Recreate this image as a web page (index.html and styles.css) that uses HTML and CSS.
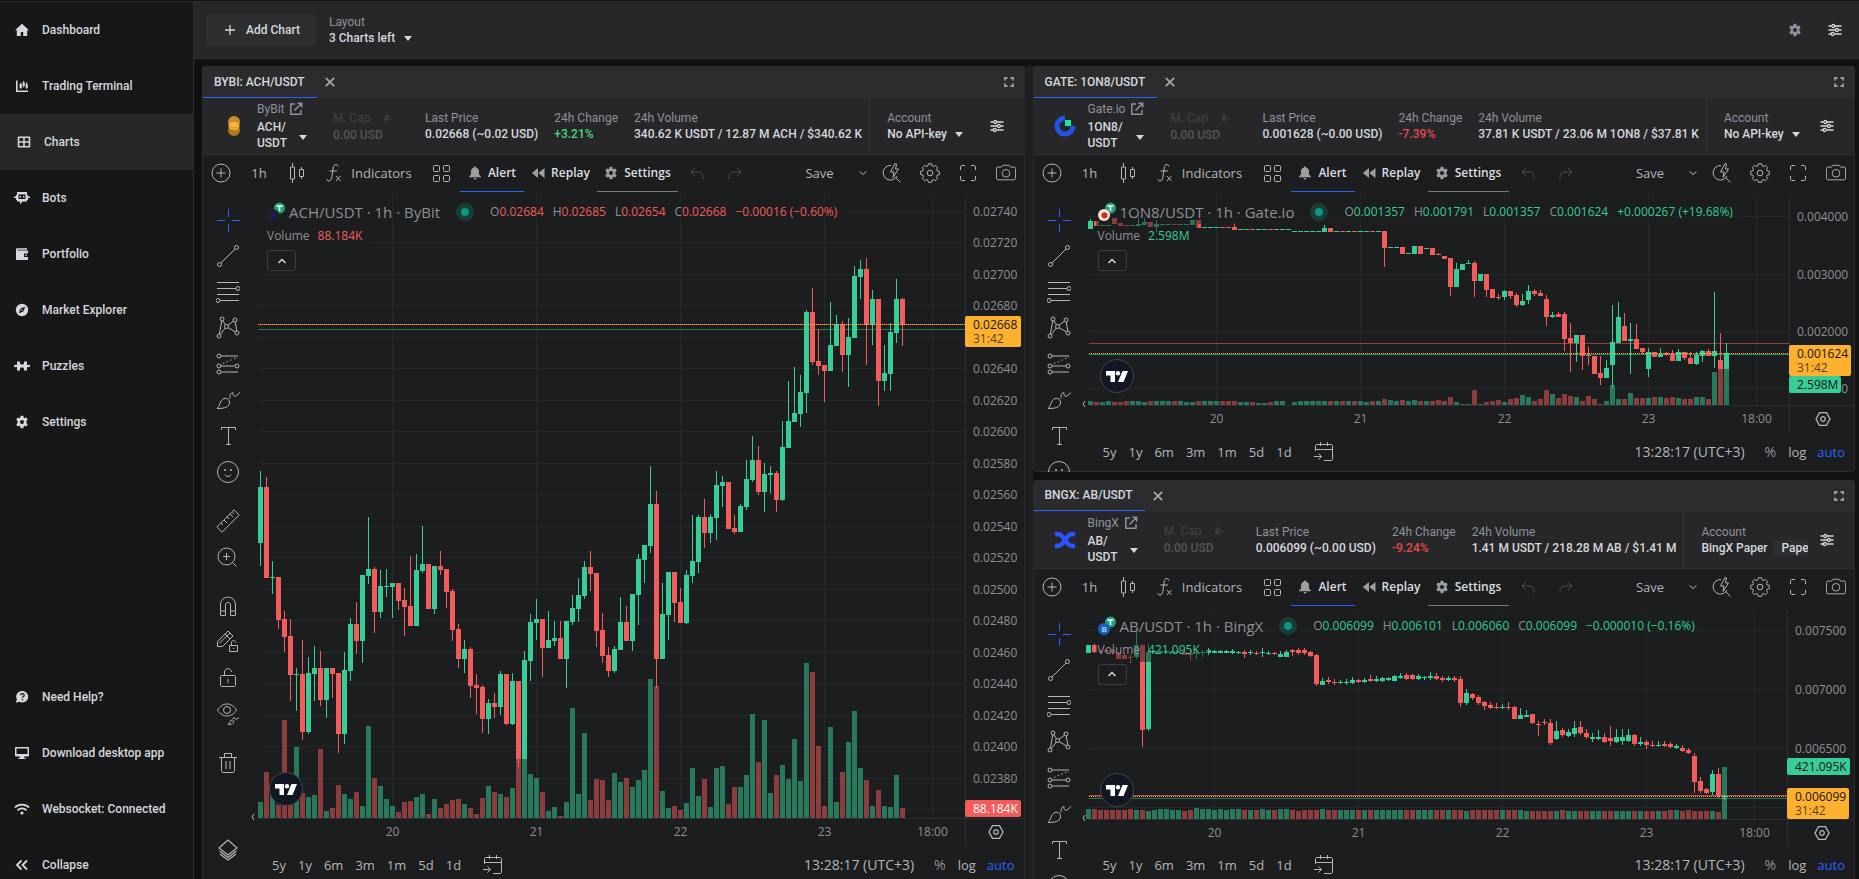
FILE: index.html
```html
<!DOCTYPE html>
<html lang="en">
<head>
    <meta charset="UTF-8">
    <meta name="viewport" content="width=device-width, initial-scale=1.0">
    <title>Charts</title>
    <link rel="stylesheet" href="styles.css">
</head>
<body>
    <!-- icon sprite -->
    <svg class="sprite" aria-hidden="true">
        <symbol id="home" viewBox="0 0 14 14"><path d="M7 .8 0 7.2h1.8V13h4V9h2.4v4h4V7.2H14z"/></symbol>
        <symbol id="terminal" viewBox="0 0 14 14"><path d="M1 1.5h1.6v9.9H13V13H1zM4.6 5h.7V3.6h.9V5h.7v4h-.7v1h-.9V9h-.7zM7.6 3.5h.6V2h.9v1.500h.7v3.500h-.7v1.500h-.9V7h-.6zM10.600 5h.6V3h.9v2h.7v4h-.7v1h-.9V9h-.6z"/></symbol>
        <symbol id="charts" viewBox="0 0 14 14"><path fill-rule="evenodd" d="M1.500 1.500h11a.8.8 0 0 1 .8.8v9.400a.8.8 0 0 1-.8.8h-11a.8.8 0 0 1-.8-.8V2.300a.8.8 0 0 1 .8-.8zM2.300 3v3.200h3.900V3zm5.500 0v3.200h3.900V3zM2.300 7.800V11h3.900V7.800zm5.500 0V11h3.900V7.800z"/></symbol>
        <symbol id="bots" viewBox="0 0 16 14"><path fill-rule="evenodd" d="M3 1h10v3h1v1.500h2V7h-2v2h-1v1.500H8.500L6 13.500v-3H3V9H2V7H0V5.500h2V4h1zM4.500 3.500v4.500h7V3.500zM5.500 5h1.500v1.500H5.500zM9 5h1.500v1.500H9z"/></symbol>
        <symbol id="portfolio" viewBox="0 0 14 14"><path fill-rule="evenodd" d="M1 2.500C1 1.700 1.700 1.200 2.400 1.200H12v1.500H2.500v.8H13v9.500H1zM9 6.500v3.500h4V6.500zM10.300 7.600h1.300v1.300h-1.300z"/></symbol>
        <symbol id="compass" viewBox="0 0 14 14"><path fill-rule="evenodd" d="M7 .8a6.200 6.200 0 1 0 0 12.400A6.200 6.200 0 0 0 7 .8zM10.200 3.800 8.400 8.400 3.800 10.200 5.600 5.600zM7 6.200a.8.8 0 1 0 0 1.600.8.8 0 0 0 0-1.600z"/></symbol>
        <symbol id="puzzle" viewBox="0 0 16 14"><path d="M3 2.500h3V4c0 .9.600 1.500 1.500 1.500h1C9.400 5.500 10 4.900 10 4V2.500h3V6h1.200c.4-.6 1.800-.3 1.800 1s-1.400 1.600-1.800 1H13v3.500h-3V10c0-.9-.6-1.500-1.500-1.500h-1C6.600 8.500 6 9.100 6 10v1.500H3V8H1.800C1.400 8.600 0 8.300 0 7s1.400-1.600 1.800-1H3z"/></symbol>
        <symbol id="gear" viewBox="0 0 14 14"><path fill-rule="evenodd" d="M5.700.8h2.600l.4 1.800 1 .6 1.700-.6 1.300 2.200L11.400 6v2l1.300 1.200-1.300 2.200-1.700-.6-1 .6-.4 1.800H5.700l-.4-1.800-1-.6-1.700.6-1.300-2.200L2.600 8V6L1.300 4.800l1.300-2.200 1.700.6 1-.6zM7 5a2 2 0 1 0 0 4 2 2 0 0 0 0-4z"/></symbol>
        <symbol id="help" viewBox="0 0 14 14"><path d="M7.300 1C3.800 1 1.200 3.500 1.200 6.600c0 1 .3 1.900.7 2.700L.8 12.800l3.500-1a6.600 6.600 0 0 0 3 .6c3.300 0 5.900-2.500 5.900-5.700S10.600 1 7.300 1z"/><path d="M5.600 5.300c0-2.200 3.600-2.200 3.600 0 0 1.200-1.700 1.200-1.700 2.500M7.500 9v1.200" stroke="#171717" stroke-width="1.300" fill="none"/></symbol>
        <symbol id="desktop" viewBox="0 0 14 14"><path fill-rule="evenodd" d="M1 1h12c.6 0 1 .4 1 1v7.500c0 .6-.4 1-1 1H9l.5 1.700H11V13H3v-.8h1.500l.5-1.700H1c-.6 0-1-.4-1-1V2c0-.6.4-1 1-1zM1.500 2.500V8h11V2.500z"/></symbol>
        <symbol id="wifi" viewBox="0 0 16 14"><path d="M.8 5.500a10.300 10.300 0 0 1 14.400 0M3.500 8.300a6.400 6.400 0 0 1 9 0" fill="none" stroke="currentColor" stroke-width="1.700"/><circle cx="8" cy="11" r="1.600"/></symbol>
        <symbol id="collapse" viewBox="0 0 14 14"><path d="M6.500 2.500 2 7l4.500 4.500M12 2.500 7.500 7l4.500 4.500" fill="none" stroke="currentColor" stroke-width="1.800"/></symbol>
        <symbol id="plus" viewBox="0 0 12 12"><path d="M6 1v10M1 6h10" stroke="currentColor" stroke-width="1.300"/></symbol>
        <symbol id="caret" viewBox="0 0 8 5"><path d="M0 0h8L4 5z"/></symbol>
        <symbol id="sliders" viewBox="0 0 14 14"><g fill="none" stroke="currentColor" stroke-width="1.300"><path d="M.5 3h3M7 3h6.500M.5 7h6.500M10.800 7h2.700M.5 11H3M6.500 11h7"/><circle cx="5.300" cy="3" r="1.500"/><circle cx="8.900" cy="7" r="1.500"/><circle cx="4.700" cy="11" r="1.500"/></g></symbol>
        <symbol id="close" viewBox="0 0 10 10"><path d="m.8.8 8.400 8.400m0-8.400L.8 9.200" stroke="currentColor" stroke-width="1.700"/></symbol>
        <symbol id="expand" viewBox="0 0 12 12"><path d="M2 4.500V2h2.500M7.500 2H10v2.500M10 7.500V10H7.500M4.500 10H2V7.500" fill="none" stroke="currentColor" stroke-width="1.800"/></symbol>
        <symbol id="link" viewBox="0 0 14 14"><path d="M6 2H1.800v10.200H12V8M8.500 1.300h4.200v4.200M12.500 1.500 5.500 8.500" fill="none" stroke="currentColor" stroke-width="1.500"/></symbol>
        <symbol id="bybit" viewBox="0 0 24 24"><circle cx="12" cy="8" r="6" fill="#c98f2c"/><circle cx="12" cy="16" r="6" fill="#b47a17"/><ellipse cx="12" cy="12" rx="5.500" ry="4" fill="#f7b63c"/><path d="M6.500 11c3 4 8 4 11 0M8 6l7 2M13 18l3-2" stroke="#c98f2c" fill="none"/></symbol>
        <symbol id="gate" viewBox="0 0 24 24"><path d="M12 4a8 8 0 1 0 8 8" fill="none" stroke="#2354e6" stroke-width="5"/><path d="M12 6h6v6h-6z" fill="#17e6a1"/></symbol>
        <symbol id="bingx" viewBox="0 0 24 24"><path d="M2 6.500c5-1.500 7 1 10 5.500s5 7 10 5.500M22 6.500c-5-1.500-7 1-10 5.500s-5 7-10 5.500" fill="none" stroke="#2a54ff" stroke-width="4.500"/></symbol>
        <symbol id="add" viewBox="0 0 20 20"><g fill="none" stroke="currentColor"><circle cx="10" cy="10" r="9"/><path d="M10 5.500v9M5.500 10h9"/></g></symbol>
        <symbol id="candles" viewBox="0 0 20 20"><path d="M3.500 4h4v12h-4zM5.500 0v4M5.500 16v4M12.500 6.500h4v7h-4zM14.500 4v2.500M14.500 13.500V16" fill="none" stroke="currentColor"/></symbol>
        <symbol id="fx" viewBox="0 0 20 20"><path d="M14 3.500c0-1-.8-2-2-2-1.700 0-2.500 1.300-2.800 3.500L7.800 14.500c-.3 2-1.300 3.500-2.800 3.500-1.200 0-2-.8-2-2M5.500 8H13M12 13l4.500 5M16.500 13 12 18" fill="none" stroke="currentColor"/></symbol>
        <symbol id="tiles" viewBox="0 0 18 18"><g fill="none" stroke="currentColor"><rect x="1.500" y="1.500" width="6" height="6" rx="1"/><rect x="11.500" y="1.500" width="6" height="6" rx="1"/><rect x="1.500" y="11.500" width="6" height="6" rx="1"/><rect x="11.500" y="11.500" width="6" height="6" rx="1"/></g></symbol>
        <symbol id="bell" viewBox="0 0 14 14"><path d="M7 .5c.7 0 1 .4 1 1 2 .5 3 2 3 4v3l2 2v.8H1v-.8l2-2v-3c0-2 1-3.500 3-4 0-.6.300-1 1-1zM5.500 12h3c0 .8-.7 1.500-1.500 1.500S5.500 12.800 5.500 12z"/></symbol>
        <symbol id="rewind" viewBox="0 0 14 14"><path d="M7 2v10L.8 7zM13.500 2v10L7.300 7z"/></symbol>
        <symbol id="undo" viewBox="0 0 16 16"><path d="M6 3 2 7l4 4M2 7h7c3 0 5 2 5 4.500V14" fill="none" stroke="currentColor"/></symbol>
        <symbol id="redo" viewBox="0 0 16 16"><path d="m10 3 4 4-4 4M14 7H7c-3 0-5 2-5 4.500V14" fill="none" stroke="currentColor"/></symbol>
        <symbol id="down" viewBox="0 0 10 10"><path d="m1.500 3.500 3.500 3 3.500-3" fill="none" stroke="currentColor"/></symbol>
        <symbol id="up" viewBox="0 0 10 10"><path d="M1.500 7 5 3.500 8.500 7" fill="none" stroke="currentColor" stroke-width="1.500"/></symbol>
        <symbol id="quick" viewBox="0 0 20 20"><path d="M9 2.500A7.300 7.300 0 1 0 15 13M13.500 14.500l5 5M13 .5 8.500 9H12l-1 5.500L16.500 6H13.500l1-5z" fill="none" stroke="currentColor"/></symbol>
        <symbol id="cog" viewBox="0 0 20 20"><g fill="none" stroke="currentColor"><circle cx="10" cy="10" r="2.800"/><path d="M8.300.8h3.400l.5 2.200 1.300.6 1.900-1.200 2.300 2.300-1.200 1.900.6 1.300 2.200.5v3.300l-2.200.5-.6 1.300 1.200 1.900-2.300 2.300-1.900-1.200-1.300.6-.5 2.200H8.300l-.5-2.200-1.300-.6-1.900 1.200-2.300-2.300 1.200-1.900-.6-1.300-2.200-.5V8.400l2.200-.5.600-1.300-1.200-1.900 2.300-2.300 1.900 1.200L7.800 3z"/></g></symbol>
        <symbol id="full" viewBox="0 0 18 18"><path d="M1.500 6V3c0-1 .5-1.500 1.500-1.500h3M12 1.500h3c1 0 1.500.5 1.500 1.500v3M16.500 12v3c0 1-.5 1.500-1.500 1.500h-3M6 16.500H3c-1 0-1.500-.5-1.500-1.500v-3" fill="none" stroke="currentColor"/></symbol>
        <symbol id="camera" viewBox="0 0 22 20"><g fill="none" stroke="currentColor"><path d="M6 3.500 7.500 1.500h7L16 3.500h4c.8 0 1.500.7 1.500 1.500v11c0 .8-.7 1.500-1.500 1.500H2c-.8 0-1.500-.7-1.500-1.500V5c0-.8.7-1.500 1.500-1.500z"/><circle cx="11" cy="10.300" r="4.200"/></g></symbol>
        <symbol id="cross" viewBox="0 0 24 24"><path d="M12.500 1v8M12.500 16v8M1 12.500h8M16 12.500h8" fill="none" stroke="currentColor"/></symbol>
        <symbol id="trend" viewBox="0 0 24 24"><g fill="none" stroke="currentColor"><circle cx="3.500" cy="20.500" r="2"/><circle cx="20.500" cy="3.500" r="2"/><path d="M5 19 19 5"/></g></symbol>
        <symbol id="fib" viewBox="0 0 24 24"><g fill="none" stroke="currentColor"><path d="M1 2.500h22M1 8.500h19M1 14.500h22M4 20.500h19"/><circle cx="22" cy="8.500" r="2"/><circle cx="2" cy="20.500" r="2"/></g></symbol>
        <symbol id="pattern" viewBox="0 0 24 24"><g fill="none" stroke="currentColor"><circle cx="6" cy="3" r="2"/><circle cx="19" cy="4" r="2"/><circle cx="3" cy="20" r="2"/><circle cx="21" cy="17" r="2"/><circle cx="10.500" cy="10.500" r="2"/><path d="M5.700 5 3.400 18M6.800 4.800l2.700 4M12 9.200l5.500-4M12.200 11.700l7.300 4.200M19.300 6l1.400 9M4.300 18.500l5-6.500"/></g></symbol>
        <symbol id="forecast" viewBox="0 0 24 24"><g fill="none" stroke="currentColor"><circle cx="3" cy="4" r="2"/><circle cx="3" cy="14" r="2"/><circle cx="21" cy="14" r="2"/><circle cx="3" cy="20" r="2"/><path d="M5 4h17M5 14h14M5 20h17"/><path d="M7 11.500 22 5" stroke-dasharray="1.500 2.500"/></g></symbol>
        <symbol id="brush" viewBox="0 0 24 24"><path d="M1 20.500c3-2 2.500-8 7-10 3-1 6 1.500 5.500 4.500-.8 4.500-5 5.500-12.500 5.500zM14 10.500c-.5-3 1-6 3-6-.5 3 1 4.500 3 3.500 2-1.500 3-3 5-4.500" fill="none" stroke="currentColor"/></symbol>
        <symbol id="text" viewBox="0 0 24 24"><path d="M5.500 6V3.500h14V6M12.500 3.500v17M10 20.500h5" fill="none" stroke="currentColor"/></symbol>
        <symbol id="smile" viewBox="0 0 24 24"><circle cx="12" cy="12" r="10.500" fill="none" stroke="currentColor"/><path d="M9 14.500c.5 2.500 5.500 2.500 6 0" fill="none" stroke="currentColor"/><circle cx="9" cy="10" r="1"/><circle cx="15" cy="10" r="1"/></symbol>
        <symbol id="ruler" viewBox="0 0 24 24"><path d="M.8 18 18 .8 23.200 6 6 23.200zM5 14l2 2M8 11l3 3M11 8l2 2M14 5l3 3M16.500 3.500l1.500 1.500" fill="none" stroke="currentColor"/></symbol>
        <symbol id="zoomin" viewBox="0 0 24 24"><g fill="none" stroke="currentColor"><circle cx="10.500" cy="11.500" r="8.500"/><path d="m16.500 17.500 4 4M10.500 8v7M7 11.500h7"/></g></symbol>
        <symbol id="magnet" viewBox="0 0 24 24"><path d="M4.500 21.500V11c0-10.500 15-10.500 15 0v10.500h-5V11c0-3.500-5-3.500-5 0v10.500zM4.500 17h5M14.500 17h5" fill="none" stroke="currentColor"/></symbol>
        <symbol id="pencil" viewBox="0 0 24 24"><path d="M1.500 16.500v-5L12 1l5 5L6.500 16.500zM3.500 13 14 3M9 4l5 5M13.500 15.500h8v6h-8zM15.500 15.500v-3c0-2.500 4-2.500 4.500 0M17.500 18v1" fill="none" stroke="currentColor"/></symbol>
        <symbol id="lock" viewBox="0 0 24 24"><path d="M6 9.500h12c1 0 1.500.5 1.500 1.500v8c0 1-.5 1.500-1.500 1.500H6c-1 0-1.500-.5-1.500-1.500v-8c0-1 .5-1.500 1.500-1.500zM8.500 9.500V6c0-4.500 6.500-4.500 7 0M12 13v4" fill="none" stroke="currentColor"/></symbol>
        <symbol id="eye" viewBox="0 0 24 24"><g fill="none" stroke="currentColor"><path d="M1.500 8c5-8 14-8 19 0-5 8-14 8-19 0z"/><circle cx="11" cy="8" r="3.500"/><path d="M12 22.500c2-1 1.500-4 4-4.500s3.500 4.500-4 4.500zM17 17c0-2 1.500-2 2 0 1 1 2-1 4-1"/></g></symbol>
        <symbol id="trash" viewBox="0 0 24 24"><path d="M3 6.500h18M8.500 6V2.500h7V6M5.500 6.500v13c0 1 .5 2 1.500 2h10c1 0 1.500-1 1.500-2v-13M10 10v8M14 10v8" fill="none" stroke="currentColor"/></symbol>
        <symbol id="layers" viewBox="0 0 24 24"><path d="M12 2 3 10l9 7 9-7zM3.500 13l8.500 6.500L20.500 13M4 16l8 6 8-6" fill="none" stroke="currentColor" stroke-width="1.200"/></symbol>
        <symbol id="calendar" viewBox="0 0 20 20"><path d="M1.500 9V4c0-1 .5-1.500 1.500-1.500h14c1 0 1.500.5 1.500 1.500v13c0 1-.5 1.500-1.500 1.500h-7M1.500 7.500h17M6.500 0v4M13.500 0v4M0 14.500h7.500M4.500 11.500l3 3-3 3" fill="none" stroke="currentColor"/></symbol>
    </svg>

    <div class="app">
        <nav class="sidebar">
            <a class="nav-item" href="#"><svg class="nav-icon"><use href="#home"/></svg>Dashboard</a>
            <a class="nav-item" href="#"><svg class="nav-icon"><use href="#terminal"/></svg>Trading Terminal</a>
            <a class="nav-item active" href="#"><svg class="nav-icon"><use href="#charts"/></svg>Charts</a>
            <a class="nav-item" href="#"><svg class="nav-icon"><use href="#bots"/></svg>Bots</a>
            <a class="nav-item" href="#"><svg class="nav-icon"><use href="#portfolio"/></svg>Portfolio</a>
            <a class="nav-item" href="#"><svg class="nav-icon"><use href="#compass"/></svg>Market Explorer</a>
            <a class="nav-item" href="#"><svg class="nav-icon"><use href="#puzzle"/></svg>Puzzles</a>
            <a class="nav-item" href="#"><svg class="nav-icon"><use href="#gear"/></svg>Settings</a>
            <div class="nav-space"></div>
            <a class="nav-item" href="#"><svg class="nav-icon"><use href="#help"/></svg>Need Help?</a>
            <a class="nav-item" href="#"><svg class="nav-icon"><use href="#desktop"/></svg>Download desktop app</a>
            <a class="nav-item" href="#"><svg class="nav-icon"><use href="#wifi"/></svg>Websocket: Connected</a>
            <button class="nav-item" type="button"><svg class="nav-icon"><use href="#collapse"/></svg>Collapse</button>
        </nav>

        <div class="content">
            <header class="topbar">
                <button class="add-chart" type="button"><svg class="i12"><use href="#plus"/></svg>Add Chart</button>
                <div class="field">
                    <label class="label" for="layout">Layout</label>
                    <div class="field-row">
                        <select class="select" id="layout"><option>3 Charts left</option></select>
                        <svg class="caret"><use href="#caret"/></svg>
                    </div>
                </div>
                <div class="topbar-actions">
                    <button class="icon-btn muted" type="button" aria-label="Settings"><svg class="i14"><use href="#gear"/></svg></button>
                    <button class="icon-btn" type="button" aria-label="Filters"><svg class="i14"><use href="#sliders"/></svg></button>
                </div>
            </header>

            <main class="board">
                <div class="column"><section class="panel" data-chart="ach"></section></div>
                <div class="gutter"></div>
                <div class="column">
                    <section class="panel" data-chart="on8"></section>
                    <section class="panel" data-chart="ab"></section>
                </div>
            </main>
        </div>
    </div>

    <script src="charts.js"></script>
</body>
</html>
```

FILE: styles.css
```css
* {
    box-sizing: border-box;
}

body {
    margin: 0;
    height: 100vh;
    overflow: hidden;
    background: #101113;
    color: #d5d8de;
    font-family: Roboto, "Liberation Sans", sans-serif;
    font-size: 12px;
    line-height: 16px;
}

button,
select {
    margin: 0;
    padding: 0;
    border: none;
    background: none;
    color: inherit;
    font: inherit;
    cursor: pointer;
}

svg {
    flex: none;
    fill: currentColor;
}

.sprite {
    position: absolute;
    width: 0;
    height: 0;
}

.i12 { width: 12px; height: 12px; }
.i14 { width: 14px; height: 14px; }
.i16 { width: 16px; height: 16px; }
.i18 { width: 18px; height: 18px; }
.i20 { width: 20px; height: 20px; }
.i24 { width: 24px; height: 24px; }

.caret {
    width: 8px;
    height: 5px;
}

.app {
    display: flex;
    height: calc(100vh + 14px);
    padding-top: 1px;
}

/* sidebar */
.sidebar {
    display: flex;
    flex-direction: column;
    flex: none;
    width: 194px;
    background: #171717;
    border-top: 1px solid #2d2d30;
    border-right: 1px solid #2d2d30;
}

.nav-item {
    display: flex;
    align-items: center;
    gap: 12px;
    flex: none;
    height: 56px;
    padding: 0 14px;
    color: #d5d8de;
    font-weight: 500;
    text-decoration: none;
}

.nav-item.active {
    padding-left: 16px;
    background: #272729;
}

.nav-icon {
    width: 16px;
    height: 14px;
}

.nav-space {
    flex: 1;
}

/* top bar */
.content {
    display: flex;
    flex-direction: column;
    flex: 1;
    min-width: 0;
}

.topbar {
    display: flex;
    align-items: center;
    flex: none;
    height: 58px;
    padding: 0 17px 0 12px;
    background: #272729;
    border-top: 1px solid #2d2d30;
    border-bottom: 1px solid #323235;
}

.add-chart {
    display: flex;
    align-items: center;
    gap: 10px;
    height: 32px;
    margin-right: 13px;
    padding: 0 16px 0 18px;
    border-radius: 4px;
    background: #2e2e30;
    font-weight: 500;
}

.label {
    display: block;
    color: #8d929e;
}

.field-row {
    display: flex;
    align-items: center;
    gap: 8px;
}

.select {
    appearance: none;
    height: 16px;
    font-weight: 500;
    outline: none;
}

.topbar-actions {
    display: flex;
    gap: 26px;
    margin-left: auto;
}

.icon-btn {
    display: flex;
}

.muted {
    color: #8d929e;
}

/* board */
.board {
    display: flex;
    flex: 1;
    min-height: 0;
    padding: 7px 4px 8px 8px;
}

.column {
    display: flex;
    flex-direction: column;
    flex: 1;
    gap: 8px;
    min-width: 0;
}

.gutter {
    width: 8px;
    background: #1f1f21;
}

.panel {
    display: flex;
    flex-direction: column;
    flex: 1;
    min-height: 0;
    overflow: hidden;
    border-radius: 4px;
    background: #1b1d1f;
    box-shadow: inset 0 0 0 1px #2d2d30;
}

.tabs {
    display: flex;
    align-items: center;
    flex: none;
    height: 32px;
    padding: 0 10px 0 1px;
    background: #2c2c2e;
}

.tab {
    height: 31px;
    margin-right: 8px;
    padding: 0 12px 0 11px;
    border-bottom: 1px solid #2962ff;
    font-weight: 500;
}

.tab-close {
    display: flex;
    color: #a5a9b4;
}

.tab-close svg {
    width: 10px;
    height: 10px;
}

.tab-expand {
    display: flex;
    margin-left: auto;
    color: #9a9faa;
}

/* ticker info */
.info {
    display: flex;
    align-items: center;
    flex: none;
    height: 57px;
    padding-left: 20px;
    background: #272729;
    border-bottom: 1px solid #2f2f32;
}

.pair {
    min-width: 50px;
    margin: 0 26px 0 11px;
}

.exchange {
    display: flex;
    align-items: center;
    gap: 5px;
    margin-bottom: 2px;
    color: #8d929e;
}

.exchange a {
    display: flex;
    color: inherit;
}

.symbol {
    display: flex;
    justify-content: space-between;
    align-items: center;
    width: 100%;
    font-weight: 500;
    text-align: left;
}

.symbol .caret {
    margin-top: 4px;
}

.stat {
    margin-right: 16px;
    white-space: nowrap;
}

.stat b,
.account b {
    display: block;
    font-weight: 500;
}

.stat-cap {
    width: 76px;
    opacity: 0.25;
}

.rank {
    margin-left: 10px;
    font-size: 10px;
    font-weight: 500;
}

.stat-volume {
    margin-right: 7px;
}

.stat .up { color: #4bd67c; }
.stat .down { color: #e5484d; }

.account {
    display: flex;
    flex-direction: column;
    justify-content: center;
    flex: 1;
    align-self: stretch;
    min-width: 0;
    overflow: hidden;
    padding-left: 17px;
    border-left: 1px solid #323235;
    white-space: nowrap;
}

.account-paper .field-row {
    gap: 5px;
}

.paper {
    padding: 0 8px;
    border-radius: 4px;
    background: #2e2e30;
    font-weight: 500;
}

.account-filter {
    display: flex;
    flex: none;
    margin: 0 21px 0 12px;
}

/* chart widget */
.toolbar,
.widget {
    font-family: "Trebuchet MS", "Open Sans", "Noto Sans", sans-serif;
    color: #b4b6bb;
}

.toolbar {
    display: flex;
    flex: none;
    height: 37px;
    padding-left: 2px;
    font-size: 13px;
}

.tool {
    display: flex;
    align-items: center;
    justify-content: center;
    flex: none;
    width: 38px;
    border-bottom: 1px solid transparent;
}

.tool-add { width: 34px; }
.tool-time { width: 42px; }

.tool-indicators {
    gap: 7px;
    width: 108px;
}

.tool-text {
    gap: 6px;
    color: #dcdee2;
    font-size: 12px;
    font-weight: 600;
}

.tool-text svg {
    color: #9c9ea3;
}

.tool-alert {
    width: 64px;
    border-color: #2962ff;
}

.tool-replay { width: 73px; }

.tool-settings {
    width: 81px;
    border-color: #77797d;
}

.tool-off {
    color: #4b4d51;
}

.tool-save {
    width: 66px;
    margin-left: auto;
}

.tool-more { width: 20px; }
.tool-more svg { width: 10px; height: 10px; }

.widget {
    display: flex;
    flex: 1;
    min-height: 0;
}

.drawing {
    display: flex;
    flex-direction: column;
    flex: none;
    width: 56px;
    padding: 10px 4px 17px 0;
    overflow: hidden;
}

.draw-tool {
    display: flex;
    align-items: center;
    justify-content: center;
    flex: none;
    height: 36px;
}

.draw-tool.selected { color: #2962ff; }
.draw-tool.group { margin-top: 13px; }
.draw-tool.last { margin-top: auto; }

.stage {
    display: flex;
    flex-direction: column;
    flex: 1;
    min-width: 0;
    padding: 4px 1px 1px 0;
}

.plot {
    position: relative;
    flex: 1;
    min-height: 0;
}

.plot-svg {
    position: absolute;
    inset: 0;
    width: 100%;
    height: 100%;
    font-size: 12px;
}

.legend {
    position: absolute;
    top: 4px;
    left: 7px;
}

.legend-row {
    display: flex;
    align-items: center;
    width: max-content;
    height: 24px;
    padding: 0 8px 0 2px;
    background: rgba(27, 29, 31, 0.5);
    color: #8e9095;
    font-size: 12px;
}

.pair-logo {
    width: 20px;
    height: 20px;
    margin-right: 2px;
}

.legend-title {
    font-size: 15px;
}

.status {
    width: 18px;
    height: 18px;
    margin: 0 16px;
    border: 5px solid #1b3b37;
    border-radius: 50%;
    background: #089981;
}

.ohlc {
    display: flex;
    gap: 9px;
}

.legend-volume { margin-left: 8px; }
.legend .up { color: #36cd96; }
.legend .down { color: #f45b5b; }

.legend-toggle {
    display: flex;
    align-items: center;
    justify-content: center;
    width: 29px;
    height: 21px;
    margin: 2px 0 0 2px;
    border: 1px solid #3b3d46;
    border-radius: 3px;
    color: #d5d8de;
}

.legend-toggle svg {
    width: 10px;
    height: 10px;
}

.footer {
    display: flex;
    align-items: center;
    flex: none;
    height: 38px;
    padding: 0 9px 0 8px;
    font-size: 13px;
}

.range { padding: 0 6px; }
.goto { display: flex; margin-left: 16px; }

.clock,
.percent {
    font-size: 14px;
}

.clock { margin-left: auto; }
.percent { margin-left: 20px; color: #8e9095; }
.log { margin-left: 12px; }
.auto { margin-left: 11px; color: #2962ff; }
```

FILE: charts.js
```javascript
const GREEN = '#36cd96';
const RED = '#f45b5b';
const ORANGE = '#fdb12f';
const STEP = 6;

// Candle rows: high, open/close top, open/close bottom, low, colour, volume.
// Levels are kept in thirds of a pixel, measured down from "base".
const charts = {
    ach: {
        tab: 'BYBI: ACH/USDT', exchange: 'ByBit', symbol: 'ACH/<br>USDT', logo: 'bybit', pair: 'ACH/USDT',
        price: '0.02668 (~0.02 USD)', change: '+3.21%', changeDir: 'up',
        volume: '340.62 K USDT / 12.87 M ACH / $340.62 K', account: 'No API-key',
        ohlc: ['0.02684', '0.02685', '0.02654', '0.02668', '−0.00016 (−0.60%)'], dir: 'down',
        legendVolume: '88.184K', volumeDir: 'down', coin: '#1d2030', coinMark: '#16168a', coinText: '▲',
        axis: 60, base: 732, lastIndex: 107,
        grid: Array.from({ length: 20 }, (_, i) => [15 + i * 31.5, i < 19 ? (0.0274 - i * 0.0002).toFixed(5) : '']),
        skip: [4],
        times: [[22, '20'], [46, '21'], [70, '22'], [94, '23'], [112, '18:00']],
        lines: [[128, RED, 0.6], [133, GREEN, 0.5]], dotted: 128,
        tags: [[120, 56, 31, ORANGE, '#141414', ['0.02668', '31:42']], [604, 56, 17, RED, '#ffffff', ['88.184K']]],
        rows: `93 141 309 378 g 48|111 141 414 414 r 138|363 411 413 462 g 70|411 411 540 567 r 40|513 537 591 636 r 294|537 588 705 783 r 40|684 702 705 813 g 213|600 702 876 900 r 75|651 699 876 882 g 63|618 684 702 783 g 69
633 684 780 798 r 207|684 684 780 834 g 21|684 684 702 774 r 30|699 699 882 939 r 99|636 690 882 912 g 72|534 552 693 723 g 57|486 552 603 642 r 78|405 405 603 669 g 36|231 387 408 432 g 276|381 387 516 579 r 120
390 438 516 534 g 96|387 438 441 471 g 57|429 429 441 534 g 36|429 429 483 510 r 18|444 480 501 588 r 48|348 498 558 558 r 51|342 390 558 558 g 63|258 372 393 399 g 72|372 372 507 507 r 12|378 378 507 522 g 57
333 378 390 405 r 30|387 387 456 504 r 42|447 453 570 603 r 54|552 567 657 684 r 57|600 627 657 699 g 42|621 627 738 774 r 30|702 735 744 822 r 12|735 741 837 879 r 60|777 789 837 882 g 96|759 789 801 834 r 78
693 702 801 825 g 72|702 702 852 855 r 63|699 723 852 855 g 90|723 723 957 981 r 190|633 660 957 957 g 190|522 546 663 723 g 132|477 537 549 600 g 120|537 537 624 711 r 78|513 600 624 624 g 21|543 594 603 618 g 33
543 594 657 657 r 6|543 543 657 744 g 48|465 504 546 555 g 330|414 465 507 546 g 72|363 381 468 477 g 255|333 381 402 453 r 54|399 399 573 621 r 117|519 570 648 669 r 114|621 645 693 711 r 54|618 627 693 699 g 135
471 546 630 630 g 108|498 546 603 603 r 120|462 462 603 633 g 93|342 357 465 555 g 114|315 315 360 429 g 144|78 192 318 338 g 417|153 192 657 744 r 396|429 522 657 657 g 81|396 396 525 600 g 30|396 396 489 546 r 36
444 486 549 549 r 24|390 405 549 552 g 45|225 363 408 429 g 150|225 231 366 399 g 66|177 231 279 324 r 117|222 231 279 309 g 33|93 135 234 300 g 150|108 126 138 201 g 156|126 126 267 267 r 42|225 264 276 282 r 93
192 198 276 276 g 93|60 117 201 210 g 129|-12 60 120 126 g 312|18 60 156 165 r 168|69 102 156 216 g 294|78 99 105 159 g 75|93 99 180 216 r 129|-57 21 180 183 g 159|-177 -57 24 24 g 117|-219 -81 -54 -54 g 237
-195 -144 -78 -39 g 111|-390 -384 -141 -81 g 465|-456 -384 -234 -225 r 438|-333 -237 -222 -195 r 216|-225 -225 -207 -114 r 36|-414 -285 -207 -207 g 273|-375 -348 -282 -282 g 48|-357 -348 -255 -204 r 138|-366 -309 -255 -159 g 228|-522 -492 -306 -306 g 321
-540 -513 -489 -423 g 150|-546 -513 -345 -225 r 114|-450 -423 -345 -285 g 36|-423 -423 -177 -102 r 84|-285 -201 -177 -147 g 36|-351 -324 -198 -147 g 33|-483 -423 -321 -291 g 129|-426 -423 -345 -282 r 30`
    },
    on8: {
        tab: 'GATE: 1ON8/USDT', exchange: 'Gate.io', symbol: '1ON8/<br>USDT', logo: 'gate', pair: '1ON8/USDT',
        price: '0.001628 (~0.00 USD)', change: '-7.39%', changeDir: 'down',
        volume: '37.81 K USDT / 23.06 M 1ON8 / $37.81 K', account: 'No API-key',
        ohlc: ['0.001357', '0.001791', '0.001357', '0.001624', '+0.000267 (+19.68%)'], dir: 'up',
        legendVolume: '2.598M', volumeDir: 'up', coin: '#f4e4d0', coinMark: '#d12b1f', coinText: '⬢',
        axis: 67, base: -408, lastIndex: 106,
        grid: [[20, '0.004000'], [78, '0.003000'], [135, '0.002000'], [192, '0.001000']], skip: [],
        times: [[21, '20'], [45, '21'], [69, '22'], [93, '23'], [111, '18:00']],
        lines: [[147, RED, 0.55], [158, GREEN, 0.6]], dotted: 157,
        tags: [[149, 62, 31, ORANGE, '#141414', ['0.001624', '31:42']], [180, 52, 17, GREEN, '#141414', ['2.598M']]],
        rows: `477 483 507 507 g 12|483 483 498 498 r 9|495 495 498 498 g 9|495 495 498 498 g 12|474 474 492 492 r 9|489 489 499 499 r 9|495 495 498 498 r 12|495 495 498 498 g 12|470 492 498 498 g 12|474 486 495 495 g 9
486 486 501 501 r 12|480 492 500 516 g 12|492 492 495 495 g 12|492 492 495 495 g 12|492 492 495 495 r 12|492 492 495 495 g 12|492 492 495 495 g 9|480 480 495 495 g 9|480 480 504 504 r 12|501 501 504 504 g 12
501 501 504 504 g 12|501 501 504 504 g 12|501 501 504 504 r 12|501 501 504 504 r 12|489 501 510 510 r 12|507 507 510 510 g 9|507 507 510 510 g 9|507 507 510 510 r 9|507 507 510 510 g 6|507 507 510 510 g 6
507 507 510 510 r 9|507 507 510 510 g 12|507 507 510 510 g 12|507 507 510 510 g 0|513 513 516 516 g 9|513 513 516 516 g 12|513 513 516 516 g 12|513 513 516 516 g 12|513 513 516 516 g 12|495 504 516 516 g 12
504 504 516 516 r 12|513 513 516 516 g 12|513 513 516 516 r 12|513 513 516 516 g 12|513 513 516 516 r 12|513 513 516 516 g 12|513 513 516 516 g 9|513 513 516 516 r 12|513 513 516 516 g 12|513 513 564 621 r 18
561 561 564 564 g 15|561 561 564 564 g 12|561 561 582 582 r 15|579 579 582 582 g 12|558 558 582 582 g 15|558 558 582 582 r 12|564 564 567 567 g 12|564 564 585 585 r 12|579 582 585 585 r 15|588 588 597 597 r 12
594 594 681 708 r 24|609 627 681 681 g 9|612 612 630 630 g 3|600 609 612 612 g 3|603 609 663 711 r 45|642 642 663 663 g 3|642 642 690 711 r 9|687 687 714 714 r 12|702 711 714 720 r 15|690 693 711 720 g 9
693 693 708 717 r 18|699 705 735 741 r 21|702 723 735 738 g 30|675 693 720 732 g 24|687 693 702 708 r 12|690 699 708 708 r 18|705 717 771 798 r 45|756 765 771 774 g 33|756 762 771 771 r 21|756 762 837 873 r 33
789 834 849 936 r 27|825 825 849 906 g 24|825 825 888 930 r 12|861 885 888 915 r 27|888 888 942 942 r 18|888 939 954 975 r 3|900 924 954 954 g 12|735 846 915 981 g 60|726 771 849 849 g 18|759 798 843 843 r 18
789 837 843 942 g 36|792 837 867 867 r 21|864 864 876 882 r 21|864 876 927 951 g 21|876 876 891 891 r 24|864 882 891 891 g 24|876 880 884 888 r 21|870 882 903 903 r 24|867 876 903 903 g 21|876 876 894 900 r 18
876 894 912 912 r 18|876 885 912 915 g 24|870 873 888 906 g 24|867 873 888 888 r 18|696 873 888 924 g 99|819 900 927 927 r 108|849 879 927 927 g 108`
    },
    ab: {
        tab: 'BNGX: AB/USDT', exchange: 'BingX', symbol: 'AB/<br>USDT', logo: 'bingx', pair: 'AB/USDT',
        price: '0.006099 (~0.00 USD)', change: '-9.24%', changeDir: 'down',
        volume: '1.41 M USDT / 218.28 M AB / $1.41 M', account: 'BingX Paper', paper: true,
        ohlc: ['0.006099', '0.006101', '0.006060', '0.006099', '−0.000010 (−0.16%)'], dir: 'up',
        legendVolume: '421.095K', volumeDir: 'up', coin: '#1263c4', coinMark: '#ffffff', coinText: 'B',
        axis: 69, base: -30, lastIndex: 106,
        grid: [[20, '0.007500'], [79, '0.007000'], [138, '0.006500'], [197, '']], skip: [],
        times: [[21, '20'], [45, '21'], [69, '22'], [93, '23'], [111, '18:00']],
        lines: [[185, RED, 0.7], [188, GREEN, 0.5]], dotted: 186,
        tags: [[148, 63, 17, GREEN, '#141414', ['421.095K']], [178, 62, 31, ORANGE, '#141414', ['0.006099', '31:42']]],
        rows: `135 135 159 159 g 30|132 135 157 160 r 30|150 152 156 159 r 27|147 150 156 159 r 27|147 150 160 165 r 27|156 160 178 178 r 27|158 164 176 176 r 27|165 170 175 188 r 30|92 135 170 178 g 27|133 135 390 441 r 27
132 156 387 393 g 24|150 154 158 160 g 27|150 154 158 160 g 30|150 154 158 160 g 30|150 154 158 160 g 27|150 154 158 160 g 27|150 155 165 165 r 24|153 160 165 182 r 27|150 155 158 178 g 33|150 157 160 170 g 30
144 150 159 165 g 30|150 153 158 160 g 27|150 153 158 160 g 30|150 153 158 160 g 27|148 153 160 162 g 30|153 155 159 162 g 30|150 155 162 174 r 27|150 155 160 165 g 27|153 158 161 164 r 27|144 156 160 170 g 30
153 158 161 164 g 27|156 158 162 165 r 27|153 162 170 170 g 30|150 156 171 171 g 30|147 150 157 168 r 27|144 150 159 165 r 24|144 150 159 165 r 27|153 156 167 170 r 27|162 165 252 258 r 27|234 243 255 255 g 30
231 240 246 252 r 27|237 246 249 255 r 27|240 246 249 252 g 27|237 246 249 255 g 27|231 240 249 252 g 27|237 240 246 250 r 27|234 239 246 249 g 27|225 236 243 246 r 27|228 236 243 246 g 27|231 234 243 246 g 27
231 234 240 243 g 27|225 228 243 243 g 27|219 228 234 237 g 27|219 226 238 240 r 27|222 226 238 240 r 27|222 228 237 240 g 27|228 231 234 240 g 27|216 228 234 240 g 27|219 228 237 240 r 27|228 234 240 246 r 27
228 234 240 243 g 27|228 234 240 246 r 27|228 237 309 321 r 27|267 279 309 315 g 24|279 282 294 300 r 27|285 291 309 315 r 27|303 306 318 330 r 27|306 315 324 327 r 27|309 321 325 327 r 27|312 321 324 327 g 27
306 320 324 330 r 27|318 321 357 357 r 27|324 345 357 357 g 27|330 344 350 350 g 24|342 342 369 372 r 24|363 371 375 408 r 24|357 366 370 375 r 24|357 369 429 435 r 24|363 393 417 420 g 24|384 390 405 411 r 27
387 396 408 411 g 24|363 384 402 411 g 24|363 380 399 405 r 24|387 399 411 417 r 24|399 411 416 426 g 24|390 411 417 420 g 24|399 411 426 430 r 24|378 414 423 438 r 24|387 411 426 430 g 24|387 411 423 435 g 24
387 405 423 426 g 24|402 405 432 438 r 24|411 426 432 438 g 24|420 426 435 447 r 24|423 435 438 441 r 24|424 435 438 441 g 24|423 432 438 441 r 24|426 432 441 444 r 27|432 438 444 447 g 27|435 444 453 456 r 24
444 450 459 462 r 27|459 468 546 579 r 24|531 543 573 579 r 24|564 567 579 582 r 24|510 522 576 585 g 24|504 522 588 594 r 21|585 588 591 600 g 156`
    }
};

const icon = (name, size) => `<svg class="i${size}"><use href="#${name}"/></svg>`;

const drawTools = ['cross', 'trend', 'fib', 'pattern', 'forecast', 'brush', 'text', 'smile',
    'ruler', 'zoomin', 'magnet', 'pencil', 'lock', 'eye', 'trash', 'layers'];
const groupStarts = ['ruler', 'magnet', 'trash'];

function drawToolClass(name) {
    if (name === 'cross') return 'draw-tool selected';
    if (name === 'layers') return 'draw-tool last';
    return groupStarts.includes(name) ? 'draw-tool group' : 'draw-tool';
}

function panelHtml(id, c) {
    const letters = ['O', 'H', 'L', 'C', ''];
    return `
        <div class="tabs">
            <button class="tab" type="button">${c.tab}</button>
            <button class="tab-close" type="button" aria-label="Close"><svg><use href="#close"/></svg></button>
            <button class="tab-expand" type="button" aria-label="Expand">${icon('expand', 12)}</button>
        </div>
        <div class="info">
            ${icon(c.logo, 24)}
            <div class="pair">
                <div class="exchange">${c.exchange}<a href="#" aria-label="Open exchange">${icon('link', 14)}</a></div>
                <button class="symbol" type="button"><span>${c.symbol}</span><svg class="caret"><use href="#caret"/></svg></button>
            </div>
            <div class="stat stat-cap"><span class="label">M. Cap <span class="rank">#-</span></span><b>0.00 USD</b></div>
            <div class="stat"><span class="label">Last Price</span><b>${c.price}</b></div>
            <div class="stat"><span class="label">24h Change</span><b class="${c.changeDir}">${c.change}</b></div>
            <div class="stat stat-volume"><span class="label">24h Volume</span><b>${c.volume}</b></div>
            <div class="account${c.paper ? ' account-paper' : ''}">
                <label class="label" for="account-${id}">Account</label>
                <div class="field-row">
                    <select class="select" id="account-${id}"><option>${c.account}</option></select>
                    ${c.paper ? '<span class="paper">Paper</span>' : '<svg class="caret"><use href="#caret"/></svg>'}
                </div>
            </div>
            <button class="account-filter" type="button" aria-label="Filters">${icon('sliders', 14)}</button>
        </div>
        <div class="toolbar">
            <button class="tool tool-add" type="button" aria-label="Add symbol">${icon('add', 20)}</button>
            <button class="tool tool-time" type="button">1h</button>
            <button class="tool tool-add" type="button" aria-label="Candles">${icon('candles', 20)}</button>
            <button class="tool tool-indicators" type="button">${icon('fx', 20)}Indicators</button>
            <button class="tool" type="button" aria-label="Templates">${icon('tiles', 18)}</button>
            <button class="tool tool-text tool-alert" type="button">${icon('bell', 14)}Alert</button>
            <button class="tool tool-text tool-replay" type="button">${icon('rewind', 14)}Replay</button>
            <button class="tool tool-text tool-settings" type="button">${icon('gear', 14)}Settings</button>
            <button class="tool tool-off" type="button" aria-label="Undo">${icon('undo', 16)}</button>
            <button class="tool tool-off" type="button" aria-label="Redo">${icon('redo', 16)}</button>
            <button class="tool tool-save" type="button">Save</button>
            <button class="tool tool-more" type="button" aria-label="Save menu"><svg><use href="#down"/></svg></button>
            <button class="tool" type="button" aria-label="Quick search">${icon('quick', 20)}</button>
            <button class="tool" type="button" aria-label="Chart settings">${icon('cog', 20)}</button>
            <button class="tool" type="button" aria-label="Fullscreen">${icon('full', 18)}</button>
            <button class="tool" type="button" aria-label="Snapshot">${icon('camera', 20)}</button>
        </div>
        <div class="widget">
            <div class="drawing">
                ${drawTools.map(t => `<button class="${drawToolClass(t)}" type="button" aria-label="${t}">${icon(t, 24)}</button>`).join('')}
            </div>
            <div class="stage">
                <div class="plot">
                    <svg class="plot-svg"></svg>
                    <div class="legend">
                        <div class="legend-row">
                            <svg class="pair-logo" viewBox="0 0 20 20">
                                <circle cx="12.500" cy="6" r="5.500" fill="#22a079"/>
                                <path d="M9.500 4h6M12.500 4v5" stroke="#fff" stroke-width="1.600"/>
                                <circle cx="6" cy="13" r="6" fill="${c.coin}"/>
                                <text x="6" y="16" text-anchor="middle" font-size="8" fill="${c.coinMark}">${c.coinText}</text>
                            </svg>
                            <span class="legend-title">${c.pair} · 1h · ${c.exchange}</span>
                            <span class="status"></span>
                            <span class="ohlc">${c.ohlc.map((v, i) => `<span>${letters[i]}<span class="${c.dir}">${v}</span></span>`).join('')}</span>
                        </div>
                        <div class="legend-row">Volume<span class="legend-volume ${c.volumeDir}">${c.legendVolume}</span></div>
                        <button class="legend-toggle" type="button" aria-label="Hide legend"><svg><use href="#up"/></svg></button>
                    </div>
                </div>
                <div class="footer">
                    ${['5y', '1y', '6m', '3m', '1m', '5d', '1d'].map(r => `<button class="range" type="button">${r}</button>`).join('')}
                    <button class="goto" type="button" aria-label="Go to date">${icon('calendar', 20)}</button>
                    <button class="clock" type="button">13:28:17 (UTC+3)</button>
                    <button class="percent" type="button">%</button>
                    <button class="log" type="button">log</button>
                    <button class="auto" type="button">auto</button>
                </div>
            </div>
        </div>`;
}

function drawPlot(svg, c) {
    const width = Math.floor(svg.clientWidth);
    const height = Math.floor(svg.clientHeight);
    const plotW = width - c.axis + 1;
    const floor = height - 28;
    const px = v => Math.round((v + c.base) / 3);
    const x = i => plotW - 62.5 - (c.lastIndex - i) * STEP;
    let out = '';

    // grid and axis labels
    c.grid.forEach(([y, label], i) => {
        const gy = Math.floor(y) + 0.5;
        out += `<path d="M0 ${gy}H${plotW}" stroke="#24282f"/>`;
        if (label && !c.skip.includes(i)) {
            out += `<text x="${plotW + 8}" y="${gy + 4}" fill="#8e9095">${label}</text>`;
        }
    });
    c.times.forEach(([i, label]) => {
        out += `<path d="M${x(i)} 0V${floor}" stroke="#24282f"/>`;
        out += `<text x="${x(i)}" y="${floor + 18}" fill="#8e9095" text-anchor="middle">${label}</text>`;
    });

    c.lines.forEach(([y, color, opacity]) => {
        out += `<path d="M0 ${y + 0.5}H${plotW}" stroke="${color}" opacity="${opacity}"/>`;
    });

    const rows = c.rows.split(/[|\n]/).map(r => r.trim().split(' '));
    rows.forEach((r, i) => {
        const color = r[4] === 'g' ? GREEN : RED;
        const h = Math.round(r[5] / 3);
        out += `<rect x="${x(i) - 2.5}" y="${floor - h}" width="5" height="${h}" fill="${color}" fill-opacity="0.52"/>`;
    });
    rows.forEach((r, i) => {
        const [high, top, bottom, low] = r.slice(0, 4).map(v => px(Number(v)));
        const color = r[4] === 'g' ? GREEN : RED;
        out += `<rect x="${x(i) - 0.5}" y="${high}" width="1" height="${low - high}" fill="${color}"/>`;
        out += `<rect x="${x(i) - 2.5}" y="${top}" width="5" height="${Math.max(1, bottom - top)}" fill="${color}"/>`;
    });

    out += `<path d="M0 ${c.dotted + 0.5}H${plotW}" stroke="${ORANGE}" stroke-dasharray="1 1"/>`;
    out += `<path d="M0 ${floor + 0.5}H${width}M${plotW + 0.5} 0V${height}" stroke="#2b2e34" fill="none"/>`;

    c.tags.forEach(([y, w, h, fill, color, lines]) => {
        out += `<rect x="${plotW}" y="${y}" width="${w}" height="${h}" rx="2" fill="${fill}"/>`;
        lines.forEach((text, i) => {
            out += `<text x="${plotW + 8}" y="${y + 13 + i * 14}" fill="${color}" fill-opacity="${i ? 0.75 : 1}">${text}</text>`;
        });
    });

    // handle that hides the left scale
    out += `<path d="M-4 ${floor - 4}l-2 3 2 3" stroke="#b4b6bb" fill="none"/>`;

    // settings hexagon in the corner
    const cx = plotW + Math.floor(c.axis / 2) + 1;
    out += `<g transform="translate(${cx} ${floor + 14})" fill="none" stroke="#b4b6bb" stroke-width="1.300"><path d="M-7 0-3.500-6.300h7L7 0 3.500 6.300h-7z"/><circle r="2.300"/></g>`;

    // TradingView badge
    out += `<g transform="translate(28 ${floor - 29})"><circle r="16.500" fill="#131722" stroke="#434651"/><path d="M-11-5h9V6h-4.500V-.5H-11zM5.500-5h5.500L6.500 6H1z" fill="#fff"/><circle cx="1" cy="-2.800" r="2.200" fill="#fff"/></g>`;
    svg.innerHTML = out;
}

const panels = [...document.querySelectorAll('.panel')];

panels.forEach(panel => {
    panel.innerHTML = panelHtml(panel.dataset.chart, charts[panel.dataset.chart]);
});

// svg root clips its content by default, the scale handle sits outside it
document.querySelectorAll('.plot-svg').forEach(svg => {
    svg.style.overflow = 'visible';
});

function drawAll() {
    panels.forEach(panel => drawPlot(panel.querySelector('.plot-svg'), charts[panel.dataset.chart]));
}

drawAll();
window.addEventListener('resize', drawAll);
```
